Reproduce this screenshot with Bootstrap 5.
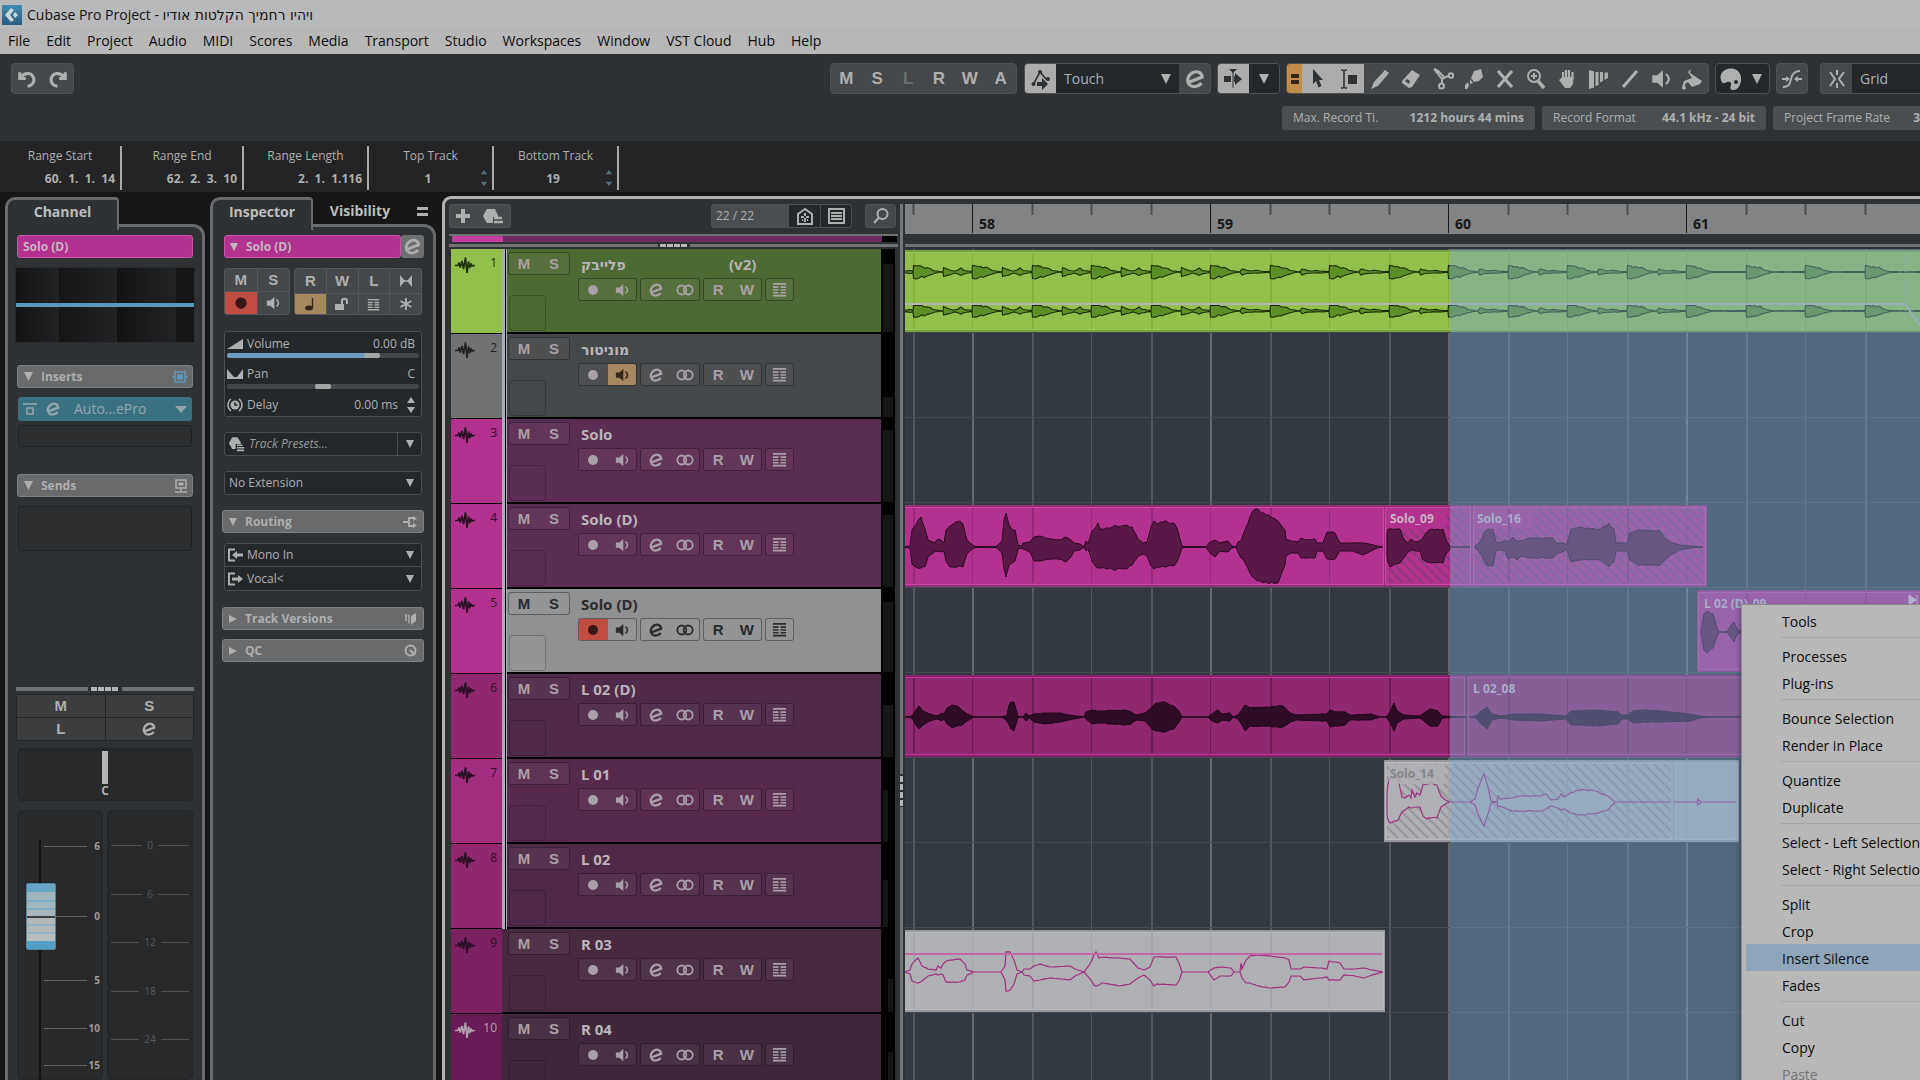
<!DOCTYPE html>
<html lang="en" data-bs-theme="dark">
<head>
<meta charset="utf-8">
<meta name="viewport" content="width=device-width, initial-scale=1">
<title>Cubase Pro Project</title>
<link href="https://cdn.jsdelivr.net/npm/bootstrap@5.3.0/dist/css/bootstrap.min.css" rel="stylesheet">
<style>
:root{--panel:#2e3235;--well:#24272a;--edge:#696a6e;--ink:#aeafaf;--btn:#45484a;--pink:#b3328f}
body{font-family:"Open Sans","Noto Sans","DejaVu Sans",sans-serif;font-size:12px;line-height:16px;background:#161616;color:var(--ink)}
svg.ico{fill:none;stroke:currentColor;stroke-width:2;flex:none;display:block}
button{background:none;border:0;padding:0;color:inherit;display:flex;align-items:center;justify-content:center;font:inherit}
a{color:inherit;text-decoration:none}
select{appearance:none;border:0;color:inherit;font:inherit;border-radius:0}
select,select.box{background:#24282b url("data:image/svg+xml,%3Csvg xmlns='http://www.w3.org/2000/svg' width='10' height='10'%3E%3Cpath d='M0 0h10L5 10z' fill='%23aeafaf'/%3E%3C/svg%3E") no-repeat right 7px center/8px 8px}
.heb{font-family:"DejaVu Sans",sans-serif}
.titlebar{height:28px;background:#b8b9bb;color:#141414;font-size:14px;gap:5px;padding:2px 2px 0}
.menubar{height:26px;background:#b7b7b7;color:#0c0c0c;font-size:14px}
.menubar a{padding:0 8px}
.toolzone{height:87px;background:var(--panel);padding:9px 0 0 11px}
.grp{height:31px;background:var(--btn);border:1px solid #4e5254;border-radius:4px;overflow:hidden}
.grp button{flex:1 1 0}
.grp>.lit{background:#abacab;color:#2f3234}
.grp>.amber{background:#c18d49;color:#33291b;flex:0 0 15px}
.grp>select{font-size:14px;padding:0 22px 0 8px;background-size:10px 10px;background-position:right 8px center}
.grp>select.snaptype{background-image:none}
.big{font:bold 17px/20px "Liberation Sans",sans-serif}
.statchip{height:24px;background:#4b4e50;border-radius:3px;padding:0 11px}
.infoline{height:51px;background:#242426;padding-top:5px}
.infocell{height:44px;width:122px;border-right:2px solid #a9a9a9;text-align:center;line-height:20px}
.infocell.wide{width:125px}
.infocell b{display:block;line-height:22px;margin-top:2px;padding-right:5px;white-space:pre}
.tabhead{height:27px}
.tabtop{border:3px solid var(--edge);border-bottom:0;border-radius:10px 4px 0 0;background:var(--panel);font-size:14px;font-weight:bold;height:33px;padding-bottom:7px;position:relative;z-index:1;margin-bottom:-6px;color:#bdbebe;border-right-width:2px}
.panebody{border:3px solid var(--edge);border-bottom:0;border-radius:0 12px 0 0;background:var(--panel);padding:8px 9px 0}
.namebar{height:23px;background:var(--pink);border:1px solid #c657a8;border-radius:3px;color:#c4b6c0;font-weight:bold;padding:0 5px}
.sechead{height:23px;background:#696a6c;border:1px solid #7e7f81;border-radius:3px;color:#aeafaf;font-weight:bold;padding:0 6px;flex:none}
.well{background:#2d2e30;border:1px solid #202223;border-radius:3px}
.eqview{height:76px;border:1px solid #27292b;background:linear-gradient(90deg,#131314,#212224 24%,#151516 24%,#222325 57%,#131314 57%,#222325 90%,#161617 90%);margin:9px -2px 0}
.grip{height:4px;width:28px;background:repeating-linear-gradient(90deg,#b4b5b5 0 6px,transparent 6px 7px)}
.ctlgrid{display:grid;border:1px solid #232526;background:#232526;gap:1px;border-radius:3px}
.ctlgrid button{background:#3c3d3f;height:22px}
.bt{font:bold 15px/18px "Liberation Sans",sans-serif}
.insgrid{border:1px solid #54575a;border-radius:3px;display:grid;background:#54575a;gap:1px;height:47px;overflow:hidden}
.insgrid button{background:#45484a}
.insgrid .rec,.rec{background:#c14c41!important;color:#351817!important}
.insgrid .mon,.mon{background:#a78760!important;color:#33261a!important}
.box,select.box{background-color:#24282b;border:1px solid #494d50;border-radius:3px}
input[type=range]{appearance:none;display:block;margin:0;padding:0;background:none}
.hslide{width:192px;height:5px}
.hslide::-webkit-slider-runnable-track{height:5px;border-radius:2px;background:#454648}
.hslide.vol::-webkit-slider-runnable-track{background:linear-gradient(90deg,#6a9dc0 140px,#454648 140px)}
.hslide::-webkit-slider-thumb{appearance:none;width:16px;height:5px;border-radius:2px;background:#a5a6a6}
.faderwell{background:#28292b;border:2px solid #242627;border-radius:5px;position:relative;font-size:10px}
.fader{position:absolute;left:7px;top:28px;width:240px;height:30px;transform-origin:0 0;transform:rotate(90deg) translateY(-100%)}
.fader::-webkit-slider-runnable-track{height:30px;background:linear-gradient(#0000 15px,#131414 15px 17px,#0000 17px)}
.fader::-webkit-slider-thumb{appearance:none;width:67px;height:30px;border-radius:2px;border:1px solid #4d86a5;background:linear-gradient(90deg,#67a5c5 8px,#a0b4bd 8px 16px,#7eacc2 16px 18px,#a3b6be 18px 24px,#7eacc2 24px 26px,#aab6bb 26px 32px,#3c3f40 32px 34px,#b3b8ba 34px 40px,#8fb3c4 40px 42px,#b3b8ba 42px 48px,#8fb3c4 48px 50px,#b9bcbc 50px 57px,#549fc6 57px)}
.scalerow{position:absolute;right:1px;width:56px;display:flex;align-items:center;justify-content:space-between;height:12px;font-weight:bold;color:#9b9c9c;line-height:12px}
.scalerow i,.peakrow i{height:1px;background:#5f6162;flex:0 0 43px}
.peakrow{position:absolute;left:2px;right:2px;display:flex;align-items:center;gap:5px;height:12px;color:#5a5c5d}
.peakrow i{flex:1 1 0;background:#4e5052}
.project{border:3px solid #b3b1b1;border-right:0;border-bottom:0;border-radius:9px 0 0 0;background:var(--panel);padding-top:5px;margin-left:6px}
.tracklist{width:454px;padding-left:4px;flex:none}
.tb{height:24px;background:var(--btn);border:1px solid #4e5254;border-radius:3px;overflow:hidden}
.track{height:85px;background:#000;flex:none}
.tcol{width:51px;height:84px;color:#2a1024;padding:7px 5px 0 4px}
.tcol span{line-height:14px}
.strip{width:5px;background:linear-gradient(90deg,#a9acb6 3px,#000 3px 4px,#a9acb6 4px)}
.tbody{height:83px;width:374px;padding:3px 0 0 1px;color:#a99fa8}
.cell{height:23px;background:#ffffff0b;border:1px solid #0000005c;border-radius:3px;overflow:hidden}
.cell button{flex:1 1 0}
.ms{width:62px}
.artbox{width:37px;height:36px;border:1px solid #00000038;border-radius:4px;margin:20px 0 0 1px}
.tname{font:bold 15px/18px "Noto Sans","Open Sans",sans-serif;height:18px;margin:3px 0 5px 3px;color:#b9b4b9;white-space:nowrap}
.tname .heb{font-size:14px}
.picked{color:#2b2c2c}.picked .tname{color:#2b2c2c}.picked .artbox{background:#ffffff0a}
.tmeter{width:14px;padding:0 2px}
.tmeter i{display:block;background:#161616}
.split{width:3px;margin:0 2px 0 1px;background:#737577;position:relative}
.split i{position:absolute;left:0;top:570px;width:3px;height:33px;background:repeating-linear-gradient(#2e3235 0 2px,#b4b5b5 2px 8px)}
.ctx{position:absolute;right:0;top:604px;width:179px;height:476px;background:#b8b8b8;border:1px solid #8c8c8c;border-right:0;border-bottom:0;color:#0c0c0c;font-size:14px;overflow:hidden;padding:2px 0 0 4px;z-index:5;box-shadow:-2px 2px 4px #0004}
.ctx a{display:block;height:27px;line-height:29px;padding-left:36px;white-space:nowrap}
.ctx hr{margin:3px 0 4px 35px;border:0;border-top:1px solid #a6a6a6;opacity:1}
.ctx .hot{background:#8ea5ba}
.ctx .off{color:#767676}
</style>
</head>
<body class="vh-100 overflow-hidden d-flex flex-column position-relative">
<svg width="0" height="0" class="position-absolute" aria-hidden="true">
<symbol id="e" viewBox="0 0 16 16"><path d="M3.4 10.3 13.2 6.6C13 3.200 9.500 1.800 6.300 3.400 2.600 5.300 1.600 9.700 4 12.200c2.200 2.200 6.200 1.600 8.800-1.200" stroke-width="2.300"/></symbol>
<symbol id="undo" viewBox="0 0 18 18"><path d="M2.500 3v5.500H8M3 8C6 3.500 12 2.500 14.500 7c2 4-.500 8-5 8.500" stroke-width="2.800"/></symbol>
<symbol id="redo" viewBox="0 0 18 18"><path d="M15.500 3v5.500H10M15 8C12 3.500 6 2.500 3.500 7c-2 4 .500 8 5 8.500" stroke-width="2.800"/></symbol>
<symbol id="tri" viewBox="0 0 10 10"><path d="M0 0h10L5 10z" fill="currentColor" stroke="none"/></symbol>
<symbol id="trir" viewBox="0 0 10 10"><path d="M0 0v10l10-5z" fill="currentColor" stroke="none"/></symbol>
<symbol id="spin" viewBox="0 0 8 16"><path d="M0 6l4-6 4 6zM0 10h8l-4 6z" fill="currentColor" stroke="none"/></symbol>
<symbol id="spin2" viewBox="0 0 6 15"><path d="M0 4l3-4 3 4zM0 11h6l-3 4z" fill="currentColor" stroke="none"/></symbol>
<symbol id="spk" viewBox="0 0 16 16"><path d="M1 5h4l4.500-4v14L5 11H1z" fill="currentColor" stroke="none"/><path d="M12 4c3 2.500 3 5.500 0 8" stroke-width="1.800"/></symbol>
<symbol id="rings" viewBox="0 0 20 14"><circle cx="6.800" cy="7" r="4.500" stroke-width="1.800"/><circle cx="13.200" cy="7" r="4.500" stroke-width="1.800"/></symbol>
<symbol id="lanes" viewBox="0 0 16 16"><path d="M1 2h14M1 5.500h6M9 5.500h6M1 8.500h6M9 8.500h6M1 11.500h6M9 11.500h6M1 14.500h14" stroke-width="1.700"/></symbol>
<symbol id="dot" viewBox="0 0 16 16"><circle cx="8" cy="8" r="5" fill="currentColor" stroke="none"/></symbol>
<symbol id="wav" viewBox="0 0 20 18"><path d="M0 9.500H3L4 6.500 5.200 11.500 7 5 8.500 13 10.500 1.500 12 17 13.500 5.500 14.800 12 16 7.500 17 10.500 18 9.500h2" stroke-width="1.700" stroke-linejoin="bevel"/></symbol>
<symbol id="preset" viewBox="0 0 20 18"><path d="M5 1h6l4 6v2H9v6H5L1 8z" fill="currentColor" stroke="none"/><path d="M10.500 10.500H17M10.500 13.500H19M10.500 16.500H19" stroke-width="1.800"/></symbol>
<symbol id="mag" viewBox="0 0 18 18"><circle cx="10.500" cy="7" r="5"/><path d="M7 10.500 2 16"/></symbol>
</svg>

<header class="titlebar d-flex align-items-center flex-shrink-0">
<svg width="20" height="24" viewBox="0 0 20 24"><defs><linearGradient id="lg" x2="0" y2="1"><stop stop-color="#3f8db5"/><stop offset="1" stop-color="#2a5a80"/></linearGradient></defs><path d="M0 2h20v20H0z" fill="url(#lg)"/><path d="M9 5l3 2-4 5 4 5-3 2-6-7z" fill="#cfd6da"/><path d="M13 9l3 3-3 3-2-3z" fill="#cfd6da"/></svg>
<span>Cubase Pro Project - <span class="heb">ויהיו רחמיך הקלטות אודיו</span></span>
</header>
<nav class="menubar d-flex align-items-center flex-shrink-0"><a href="#">File</a><a href="#">Edit</a><a href="#">Project</a><a href="#">Audio</a><a href="#">MIDI</a><a href="#">Scores</a><a href="#">Media</a><a href="#">Transport</a><a href="#">Studio</a><a href="#">Workspaces</a><a href="#">Window</a><a href="#">VST Cloud</a><a href="#">Hub</a><a href="#">Help</a></nav>

<section class="toolzone flex-shrink-0">
<div class="d-flex">
<div class="grp d-flex" style="width:63px"><button aria-label="Undo"><svg class="ico" width="20" height="20"><use href="#undo"/></svg></button><button aria-label="Redo"><svg class="ico" width="20" height="20"><use href="#redo"/></svg></button></div>
<div class="grp d-flex big ms-auto" style="width:187px"><button>M</button><button>S</button><button style="color:#6c6e6f">L</button><button>R</button><button>W</button><button>A</button></div>
<div class="grp d-flex" style="width:187px;margin-left:7px"><button class="lit" aria-label="Automation follows events" style="flex:0 0 31px"><svg class="ico" width="22" height="24" viewBox="0 0 22 24"><path d="M3 18 10 5l7 8" stroke-width="1.600"/><circle cx="3.500" cy="17" r="2" fill="currentColor" stroke="none"/><circle cx="10" cy="5" r="2" fill="currentColor" stroke="none"/><circle cx="18" cy="12" r="2" fill="currentColor" stroke="none"/><path d="M7 15h5v-4l6 6-6 6v-4H7z" fill="currentColor" stroke="none"/></svg></button><select aria-label="Automation mode" style="width:123px"><option>Touch</option></select><button aria-label="Automation panel"><svg class="ico" width="22" height="22"><use href="#e"/></svg></button></div>
<div class="grp d-flex" style="width:63px;margin-left:6px"><button class="lit" aria-label="Auto-scroll"><svg class="ico" width="20" height="20" viewBox="0 0 20 20"><path d="M1 7h7v6H1zM12 7v-3l7 6-7 6v-3h-1V7zM6 0h8l-4 4z" fill="currentColor" stroke="none"/><path d="M10 1v18" stroke-width="1"/></svg></button><button aria-label="Auto-scroll options" style="background:#24282b"><svg class="ico" width="10" height="10"><use href="#tri"/></svg></button></div>
<div class="grp d-flex" style="width:423px;margin-left:6px">
<button class="amber" aria-label="Combine tools"><svg class="ico" width="8" height="12" viewBox="0 0 8 12"><path d="M0 3h8M0 9h8" stroke-width="4"/></svg></button>
<button class="lit" aria-label="Object selection"><svg class="ico" width="14" height="20" viewBox="0 0 14 20"><path d="M2 0l10 11H8l2.500 6-3 1.500L5 12l-3 3z" fill="currentColor" stroke="none"/></svg></button>
<button class="lit" aria-label="Range selection"><svg class="ico" width="20" height="22" viewBox="0 0 20 22"><path d="M2 2q3 0 3 1 0-1 3-1M5 3v16M2 20q3 0 3-1 0 1 3 1" stroke-width="1.600"/><path d="M9 7h9v9H9z" fill="currentColor" stroke="none"/></svg></button>
<button aria-label="Draw"><svg class="ico" width="20" height="22" viewBox="0 0 20 22"><path d="M1 21l3-7L15 2l4 3L8 18z" fill="currentColor" stroke="none"/></svg></button>
<button aria-label="Erase"><svg class="ico" width="20" height="20" viewBox="0 0 20 20"><path d="M11 1l8 5-8 12-3 1-7-5v-2z" fill="currentColor" stroke="none"/><path d="M4 12l4 3 1-3-3-2z" fill="#45484a" stroke="none"/></svg></button>
<button aria-label="Split"><svg class="ico" width="22" height="22" viewBox="0 0 22 22"><path d="M2 1l8 10 6-3M10 10v5M2 1l3 1 8 8"/><circle cx="9.500" cy="18" r="2.500"/><circle cx="19" cy="7.500" r="2.300"/></svg></button>
<button aria-label="Glue"><svg class="ico" width="20" height="22" viewBox="0 0 20 22"><path d="M10 3l7-2 2 8-4 4-5 1-3-4zM6 11l3 4-3 1zM1 17l3-3 1 4-2 3H1z" fill="currentColor" stroke="none"/></svg></button>
<button aria-label="Mute"><svg class="ico" width="18" height="20" viewBox="0 0 18 20"><path d="M2 2l14 16M16 2 2 18" stroke-width="3.200"/></svg></button>
<button aria-label="Zoom"><svg class="ico" width="20" height="22" viewBox="0 0 20 22"><circle cx="8" cy="8" r="6"/><path d="M8 5v6M5 8h6"/><path d="M12 13l6 7" stroke-width="3.500"/></svg></button>
<button aria-label="Hand"><svg class="ico" width="18" height="22" viewBox="0 0 18 22"><path d="M5 11V4M8 10V2M11 10V2M14.500 11V4" stroke-width="2.200"/><path d="M4 9h11.600l-.600 7-3 4H7L1 12l1.500-1z" fill="currentColor" stroke="none"/></svg></button>
<button aria-label="Comp"><svg class="ico" width="22" height="20" viewBox="0 0 22 20"><path d="M1 1l5 1.500v16L1 20zM7.500 3h3v13l-3 1zM12 3h3v9l-3 1.500zM16.500 3.500h3.500V9l-3.500 2z" fill="currentColor" stroke="none"/></svg></button>
<button aria-label="Line"><svg class="ico" width="18" height="20" viewBox="0 0 18 20"><path d="M2 18 16 2" stroke-width="3"/></svg></button>
<button aria-label="Play"><svg class="ico" width="20" height="20"><use href="#spk"/></svg></button>
<button aria-label="Color"><svg class="ico" width="22" height="22" viewBox="0 0 22 22"><path d="M10 1 9 5l12 8-2 3-8 3-4-5-3 2 1 5-3 1-1-3 2-6 8-3-4-6z" fill="currentColor" stroke="none"/></svg></button>
</div>
<div class="grp d-flex" style="width:55px;margin-left:6px;background:#24282b"><button aria-label="Event colors"><svg class="ico" width="24" height="24" viewBox="0 0 24 24"><path d="M3 15C0 10 2 5 6 3c6-3 13-1 15 4 2 4 1 8 0 10-1 4-4 6-7 6s-3-3-2-5-1-4-4-3c-2 1-4 2-5 0z" fill="currentColor" stroke="none"/><circle cx="17" cy="15" r="2" fill="#24282b" stroke="none"/></svg></button><button style="flex:0 0 24px" aria-label="Color menu"><svg class="ico" width="10" height="10"><use href="#tri"/></svg></button></div>
<div class="grp d-flex" style="width:32px;margin-left:6px"><button aria-label="Snap to zero crossing"><svg class="ico" width="22" height="22" viewBox="0 0 22 22"><path d="M2 19c6 0 7-3 8-8s4-8 9-8M1 11h5M16 11h5" stroke-width="1.800"/><path d="M5 8l4 3-4 3zM17 8v6l-4-3z" fill="currentColor" stroke="none"/></svg></button></div>
<div class="grp d-flex border-end-0 rounded-end-0" style="width:100px;margin-left:12px"><button aria-label="Snap" style="flex:0 0 31px"><svg class="ico" width="20" height="20" viewBox="0 0 20 20"><path d="M10 1v5M10 14v5M3 3l5 7-5 7M17 3l-5 7 5 7"/></svg></button><select aria-label="Snap type" class="flex-fill snaptype"><option>Grid</option></select></div>
</div>
<div class="d-flex justify-content-end" style="margin-top:12px;gap:7px">
<div class="statchip d-flex align-items-center justify-content-between" style="width:253px"><span>Max. Record Ti.</span><b>1212 hours 44 mins</b></div>
<div class="statchip d-flex align-items-center justify-content-between" style="width:224px"><span>Record Format</span><b>44.1 kHz - 24 bit</b></div>
<div class="statchip d-flex align-items-center justify-content-between overflow-hidden rounded-end-0 pe-0" style="width:147px"><span>Project Frame Rate</span><b>3</b></div>
</div>
</section>

<section class="infoline d-flex flex-shrink-0">
<div class="infocell text-end"><div class="text-center">Range Start</div><b>60.  1.  1.  14</b></div>
<div class="infocell text-end"><div class="text-center">Range End</div><b>62.  2.  3.  10</b></div>
<div class="infocell wide text-end"><div class="text-center">Range Length</div><b>2.  1.  1.116</b></div>
<div class="infocell wide position-relative">Top Track<b>1</b><svg class="ico position-absolute bottom-0 end-0 mb-1 me-1" width="8" height="16" style="color:#55707f"><use href="#spin2"/></svg></div>
<div class="infocell wide position-relative">Bottom Track<b>19</b><svg class="ico position-absolute bottom-0 end-0 mb-1 me-1" width="8" height="16" style="color:#55707f"><use href="#spin2"/></svg></div>
</section>

<main class="d-flex flex-fill overflow-hidden" style="padding:5px 0 0 5px;min-height:0">
<!-- channel strip -->
<aside class="d-flex flex-column flex-shrink-0" style="width:200px">
<div class="tabhead d-flex"><div class="tabtop d-flex align-items-center justify-content-center" style="width:114px">Channel</div></div>
<div class="panebody flex-fill d-flex flex-column" style="min-height:0">
<div class="namebar d-flex align-items-center flex-shrink-0">Solo (D)</div>
<div class="eqview flex-shrink-0"><div style="height:4px;margin-top:35px;background:#5c97bd"></div></div>
<div class="sechead d-flex align-items-center" style="margin-top:22px"><svg class="ico" width="9" height="9"><use href="#tri"/></svg><span class="ms-2">Inserts</span><svg class="ico ms-auto" width="16" height="12" viewBox="0 0 16 12" style="color:#5f98bd;margin-right:-2px"><path d="M3 1h10v10H3zM0 6h3M13 6h3" stroke-width="1.500"/><path d="M5 3.500h6v5H5z" fill="currentColor" stroke="none"/></svg></div>
<div class="d-flex align-items-center flex-shrink-0" style="height:24px;margin:9px 1px 0;background:#3a7181;border-radius:3px;padding:0 5px;color:#94a6ac"><svg class="ico" width="14" height="14" viewBox="0 0 14 14"><path d="M0 2h14M4 6h6v6H4z" stroke-width="1.600"/></svg><svg class="ico ms-2" width="16" height="16"><use href="#e"/></svg><span class="flex-fill" style="font-size:14px;padding-left:13px">Auto...ePro</span><svg class="ico" width="12" height="7" viewBox="0 0 10 10" preserveAspectRatio="none"><path d="M0 0h10L5 10z" fill="currentColor" stroke="none"/></svg></div>
<div class="well flex-shrink-0" style="height:22px;margin:4px 1px 0"></div>
<div class="sechead d-flex align-items-center" style="margin-top:27px"><svg class="ico" width="9" height="9"><use href="#tri"/></svg><span class="ms-2">Sends</span><svg class="ico ms-auto" width="14" height="14" viewBox="0 0 14 14" style="margin-right:-2px"><path d="M2 1h10v8H2zM7 9v3M1 13h12" stroke-width="1.500"/><path d="M4.500 3.500h5v3h-5z" fill="currentColor" stroke="none"/></svg></div>
<div class="well flex-shrink-0" style="height:45px;margin:9px 1px 0"></div>
<div class="d-flex align-items-center justify-content-between flex-shrink-0" style="margin:136px -1px 3px;gap:3px"><div class="flex-fill" style="height:4px;background:#6f7071"></div><div class="grip"></div><div class="flex-fill" style="height:4px;background:#6f7071"></div></div>
<div class="ctlgrid bt flex-shrink-0" style="grid-template-columns:1fr 1fr;margin:0 -1px"><button>M</button><button>S</button><button>L</button><button aria-label="Edit channel"><svg class="ico" width="16" height="16"><use href="#e"/></svg></button></div>
<div class="faderwell d-flex flex-column align-items-center flex-shrink-0" style="height:53px;margin-top:7px"><div style="width:6px;height:33px;margin-top:1px;background:#b4b5b5"></div><b style="font-size:12px;line-height:14px">C</b></div>
<div class="d-flex flex-fill" style="gap:4px;margin-top:9px">
<div class="faderwell flex-fill" style="flex-basis:0" id="faderbox"><input class="fader" type="range" value="25" min="0" max="100" aria-label="Channel volume"></div>
<div class="faderwell flex-fill overflow-hidden" style="flex-basis:0" id="peakbox"></div>
</div>
</div>
</aside>

<!-- inspector -->
<aside class="d-flex flex-column flex-shrink-0" style="width:226px;margin-left:5px">
<div class="tabhead d-flex"><div class="tabtop d-flex align-items-center justify-content-center" style="width:103px">Inspector</div><a href="#" class="d-flex align-items-center justify-content-center fw-bold" style="font-size:14px;width:94px;color:#bdbebe;height:28px">Visibility</a><svg class="ico" width="12" height="29" viewBox="0 0 12 29" style="margin-left:10px"><path d="M0 11.500h11M0 17.500h11" stroke-width="3"/></svg></div>
<div class="panebody flex-fill" style="padding-left:11px">
<div class="d-flex"><div class="namebar flex-fill d-flex align-items-center"><svg class="ico" width="8" height="8"><use href="#tri"/></svg><span class="ms-2">Solo (D)</span></div><button style="width:23px;background:#6e6f71;border-radius:3px" aria-label="Edit channel settings"><svg class="ico" width="19" height="19"><use href="#e"/></svg></button></div>
<div class="d-flex" style="margin:10px 2px 0 0;gap:4px">
<div class="insgrid bt" style="grid-template-columns:1fr 1fr;width:66px"><button>M</button><button>S</button><button class="rec" aria-label="Record enable"><svg class="ico" width="18" height="18"><use href="#dot"/></svg></button><button aria-label="Monitor"><svg class="ico" width="14" height="14"><use href="#spk"/></svg></button></div>
<div class="insgrid bt flex-fill" style="grid-template-columns:repeat(4,1fr)"><button>R</button><button>W</button><button>L</button><button aria-label="Freeze"><svg class="ico" width="12" height="12" viewBox="0 0 12 12"><path d="M0 0l5 6-5 6zM12 0 7 6l5 6z" fill="currentColor" stroke="none"/><path d="M4 6h4" stroke-width="1.500"/></svg></button><button class="mon" aria-label="Musical time"><svg class="ico" width="12" height="14" viewBox="0 0 12 14"><ellipse cx="5" cy="11" rx="4" ry="2.500" fill="currentColor" stroke="none"/><path d="M8.500 11V1" stroke-width="1.300"/></svg></button><button aria-label="Lock"><svg class="ico" width="14" height="14" viewBox="0 0 14 14"><path d="M0 7h9v6H0z" fill="currentColor" stroke="none"/><path d="M7 8V4c0-3 5-3 5 0v3"/></svg></button><button aria-label="Lanes"><svg class="ico" width="13" height="13"><use href="#lanes"/></svg></button><button aria-label="Phase"><svg class="ico" width="14" height="14" viewBox="0 0 14 14"><path d="M7 1v12M1.500 4l11 6M12.500 4l-11 6" stroke-width="1.800"/></svg></button></div>
</div>
<div class="box" style="margin:16px 2px 0 0;padding:2px 2px 3px;height:86px">
<div class="d-flex align-items-center" style="height:19px"><svg class="ico" width="16" height="10" viewBox="0 0 16 10"><path d="M0 10 16 0v10z" fill="currentColor" stroke="none"/></svg><label for="vol" class="ms-1">Volume</label><span class="ms-auto me-1">0.00 dB</span></div>
<input id="vol" class="hslide vol" type="range" min="0" max="100" value="78">
<div class="d-flex align-items-center" style="height:20px;margin-top:6px"><svg class="ico" width="16" height="10" viewBox="0 0 16 10"><path d="M0 0v10h16V0l-6 8H7z" fill="currentColor" stroke="none"/></svg><label for="pan" class="ms-1">Pan</label><span class="ms-auto me-1">C</span></div>
<input id="pan" class="hslide" type="range" min="0" max="100" value="50">
<div class="d-flex align-items-center" style="height:20px;margin-top:6px"><svg class="ico" width="16" height="14" viewBox="0 0 16 14"><circle cx="8" cy="7" r="4.500" fill="currentColor" stroke="none"/><path d="M8 4v3h2.500" stroke="#24282b" stroke-width="1.300"/><path d="M4 1C0 4 0 10 4 13M12 1c4 3 4 9 0 12" stroke-width="1.500"/></svg><span class="ms-1">Delay</span><span class="ms-auto" style="margin-right:9px">0.00 ms</span><svg class="ico me-1" width="8" height="16"><use href="#spin"/></svg></div>
</div>
<div class="box d-flex align-items-center" style="margin:15px 2px 0 0;height:24px;padding:0 0 0 3px"><svg class="ico" width="17" height="16"><use href="#preset"/></svg><em class="ms-1" style="color:#989a9a">Track Presets...</em><button class="ms-auto h-100" style="width:24px;border-left:1px solid #494d50" aria-label="Choose preset"><svg class="ico" width="8" height="8"><use href="#tri"/></svg></button></div>
<select class="box d-block" aria-label="Extension" style="margin-top:15px;height:24px;width:198px;padding:0 4px"><option>No Extension</option></select>
<div class="sechead d-flex align-items-center" style="margin:15px 0 0 -2px"><svg class="ico" width="8" height="8"><use href="#tri"/></svg><span class="ms-2">Routing</span><svg class="ico ms-auto" width="14" height="12" viewBox="0 0 14 12"><path d="M0 6h5M11 2H6v8h5" stroke-width="1.800"/><path d="M10 0l4 2.500L10 5zM10 7l4 2.500-4 2.500z" fill="currentColor" stroke="none"/></svg></div>
<div class="box" style="margin:10px 2px 0 0;height:48px">
<div class="d-flex align-items-center" style="height:23px;padding-left:3px;border-bottom:1px solid #494d50"><svg class="ico" width="15" height="14" viewBox="0 0 15 14"><path d="M7 1.500H1v11h6" /><path d="M4 7l5-4v2.500h6v3H9V11z" fill="currentColor" stroke="none"/></svg><select class="flex-fill" aria-label="Input routing" style="padding:0 4px"><option>Mono In</option></select></div>
<div class="d-flex align-items-center" style="height:23px;padding-left:3px"><svg class="ico" width="15" height="14" viewBox="0 0 15 14"><path d="M7 1.500H1v11h6"/><path d="M15 7l-5-4v2.500H4v3h6V11z" fill="currentColor" stroke="none"/></svg><select class="flex-fill" aria-label="Output routing" style="padding:0 4px"><option>Vocal&lt;</option></select></div>
</div>
<div class="sechead d-flex align-items-center" style="margin:16px 0 0 -2px"><svg class="ico" width="8" height="8"><use href="#trir"/></svg><span class="ms-2">Track Versions</span><svg class="ico ms-auto" width="12" height="12" viewBox="0 0 12 12"><path d="M1 1v7M4 1.500v9" stroke-width="1.500"/><path d="M6 3l5-3v8l-5 4z" fill="currentColor" stroke="none"/></svg></div>
<div class="sechead d-flex align-items-center" style="margin:9px 0 0 -2px"><svg class="ico" width="8" height="8"><use href="#trir"/></svg><span class="ms-2">QC</span><svg class="ico ms-auto" width="13" height="13" viewBox="0 0 13 13"><circle cx="6.500" cy="6.500" r="5"/><path d="M6 6l5 5"/></svg></div>
</div>
</aside>

<!-- project window -->
<section class="project d-flex flex-fill" style="min-width:0;margin-top:-1px">
<div class="tracklist d-flex flex-column">
<div class="d-flex flex-shrink-0">
<div class="tb d-flex" style="width:62px"><button class="flex-fill" aria-label="Add track"><svg class="ico" width="14" height="14" viewBox="0 0 14 14"><path d="M7 0v14M0 7h14" stroke-width="4"/></svg></button><button class="flex-fill" aria-label="Use track preset"><svg class="ico" width="22" height="16" viewBox="0 0 22 16"><path d="M5 1h8l3 6v2h-5v6H5L1 8z" fill="currentColor" stroke="none"/><path d="M12 10h8M12 14h9" stroke-width="2.400"/></svg></button></div>
<div class="tb d-flex ms-auto" style="width:141px"><span class="ps-1 flex-fill" style="line-height:22px;background:#4b4e50">22 / 22</span><button style="width:31px;background:#24282b" aria-label="Track visibility"><svg class="ico" width="18" height="17" viewBox="0 0 18 17"><path d="M2 6l7-5 7 5v10H2z"/><path d="M5 9h3M10 9h3M9 5v3M9 10v4M6 12h1M11 12h1" /></svg></button><button style="width:31px;background:#24282b;border-left:1px solid #4e5254" aria-label="Divide list"><svg class="ico" width="17" height="16" viewBox="0 0 17 16"><path d="M1 1h15v14H1zM3 5h11M3 8h11M3 11h11"/></svg></button></div>
<div class="tb d-flex" style="width:31px;margin:0 3px 0 13px"><button class="flex-fill" aria-label="Find track"><svg class="ico" width="18" height="18"><use href="#mag"/></svg></button></div>
</div>
<div class="flex-shrink-0" style="margin:6px 1px 0 0;height:2px;background:#6f7173"></div>
<div class="flex-shrink-0" style="margin:0 2px 2px 3px;height:6px;background:linear-gradient(90deg,#c43d9f 51px,#6a2d60 51px 430px,#000 430px)"></div>
<div class="d-flex flex-shrink-0" style="gap:2px;margin:0 1px 2px 0"><div style="height:3px;width:209px;background:#6f7173"></div><div class="grip" style="height:3px"></div><div class="flex-fill" style="height:3px;background:#6f7173"></div></div>
<div id="tracks" class="flex-fill overflow-hidden" style="margin-left:2px;width:444px;background:#000"></div>
</div>
<div class="split flex-shrink-0"><i></i></div>
<div class="d-flex flex-column flex-fill" style="min-width:0">
<svg id="ruler" class="flex-shrink-0 w-100" height="30" style="background:#828385"></svg>
<div class="flex-shrink-0" style="height:3px;margin:10px 0 2px;background:#6f7173"></div>
<svg id="arrange" class="flex-fill w-100" style="min-height:0;background:#323941"></svg>
</div>
</section>
</main>

<div class="ctx" role="menu"><a href="#">Tools</a><hr><a href="#">Processes</a><a href="#">Plug-ins</a><hr><a href="#">Bounce Selection</a><a href="#">Render in Place</a><hr><a href="#">Quantize</a><a href="#">Duplicate</a><hr><a href="#">Select - Left Selection Side to Cursor</a><a href="#">Select - Right Selection Side to Cursor</a><hr><a href="#">Split</a><a href="#">Crop</a><a href="#" class="hot">Insert Silence</a><a href="#">Fades</a><hr><a href="#">Cut</a><a href="#">Copy</a><a href="#" class="off">Paste</a></div>

<script>
const ic=(id,w,h)=>`<svg class="ico" width="${w}" height="${h||w}"><use href="#${id}"/></svg>`;

/* track list: name, colour, body, [meter top, left, width], state */
const TRACKS=[
 ['<span class="heb" style="display:inline-block;width:148px">פלייבק</span>(v2)','#93bf4d','#4e6a33',15,0,10,''],
 ['<span class="heb">מוניטור</span>','#717274','#45484a',63,0,10,'mon'],
 ['Solo','#b3328f','#5c2d52',11,0,10,''],
 ['Solo (D)','#b3328f','#5c2d52',11,0,10,''],
 ['Solo (D)','#b3328f','#8f9091',13,0,10,'rec'],
 ['L 02 (D)','#90286f','#4f2a49',31,0,10,''],
 ['L 01','#a22d81','#572a4d',31,0,5,''],
 ['L 02','#90286f','#4f2a48',36,0,5,''],
 ['R 03','#7b2162','#482a40',50,5,5,''],
 ['R 04','#681b54','#40283c',38,5,5,'']];
document.getElementById('tracks').innerHTML=TRACKS.map((t,i)=>{
 const linked=i<8;
 return `<div class="track d-flex"><div class="tcol d-flex justify-content-between" style="background:${t[1]};${i==9?'color:#b0a0ac':i==0?'color:#22330f':i==1?'color:#222':''}">${ic('wav',20,18)}<span>${i+1}</span></div>
 ${linked?'<div class="strip"></div>':''}
 <div class="tbody d-flex ${t[6]=='rec'?'picked':''}" style="background:${t[2]};${linked?'':'width:379px;padding-left:6px'}">
 <div style="width:70px"><div class="cell ms d-flex bt"><button>M</button><button>S</button></div><div class="artbox"></div></div>
 <div><div class="tname">${t[0]}</div><div class="d-flex bt" style="gap:3px">
 <div class="cell d-flex" style="width:59px"><button class="${t[6]=='rec'?'rec':''}" aria-label="Record enable">${ic('dot',16)}</button><button class="${t[6]=='mon'?'mon':''}" aria-label="Monitor">${ic('spk',14)}</button></div>
 <div class="cell d-flex" style="width:60px"><button aria-label="Edit">${ic('e',16)}</button><button aria-label="Channel format">${ic('rings',20,14)}</button></div>
 <div class="cell d-flex" style="width:59px"><button>R</button><button>W</button></div>
 <div class="cell d-flex" style="width:29px"><button aria-label="Show lanes">${ic('lanes',15)}</button></div></div></div></div>
 <div class="tmeter"><i style="width:${t[5]}px;margin:${t[3]}px 0 0 ${t[4]}px;height:${83-t[3]}px"></i></div></div>`}).join('');

/* fader and peak scales: label, y inside the well */
document.getElementById('faderbox').insertAdjacentHTML('afterbegin',[['6',28],['0',98],['5',162],['10',210],['15',247]].map(s=>`<div class="scalerow" style="top:${s[1]}px"><i></i>${s[0]}</div>`).join(''));
document.getElementById('peakbox').innerHTML=[0,6,12,18,24,30].map((v,k)=>`<div class="peakrow" style="top:${Math.round(27+48.5*k)}px"><i></i>${v}<i></i></div>`).join('');

/* ruler */
const beat=k=>Math.round(912.5+59.5*k);
let r='';
for(let k=0;k<17;k++){const bar=k%4==1,x=beat(k)-905;
 r+=`<path d="M${x+.5} 0V${bar?29:11}" stroke="${bar?'#1a1b1c':'#4c4d4f'}" stroke-width="${bar?1:2}"/>`;
 if(bar)r+=`<text x="${x+7}" y="25" font-size="14" font-weight="bold" fill="#161718">${58+(k-1)/4}</text>`}
document.getElementById('ruler').innerHTML=r;

/* envelope points: x, height above, height below the centre line */
const P=s=>s.split(';').map(a=>{a=a.split(',').map(Number);return [a[0],a[1]||0,a.length>2?a[2]:a[1]||0]});
function wave(pts,cy,attr,rough=.06){
 let up=[],dn=[];
 for(let i=0;i<pts.length;i++){
  const [x,u,d]=pts[i],n=pts[i+1];
  up.push([x,cy-u]);dn.push([x,cy+d]);
  if(!n)continue;
  const m=Math.floor((n[0]-x)/2);
  for(let j=1;j<m;j++){const f=j/m,X=x+(n[0]-x)*f,w=1+rough*Math.sin(X*7.3)*Math.cos(X*2.1);
   up.push([X,cy-(u+(n[1]-u)*f)*w]);dn.push([X,cy+(d+(n[2]-d)*f)*w])}
 }
 return `<path ${attr} d="M${up.concat(dn.reverse()).map(p=>p[0].toFixed(1)+' '+p[1].toFixed(1)).join('L')}Z"/>`}
const soloA=P('905,.5;910,1;912,17,17;916,22,20;921,30,21;925,18,20;928,7,10;934,4,5;938,8,4;941,7,5;944,4,4;946,17,14;950,21,20;960,26,19;963,23,20;967,7,7;971,3,3;974,1,1;976,.5;995,.5;997,1,1;1002,6,6;1004,27,22;1006,34,30;1009,22,18;1012,17,16;1015,17,14;1018,2,2;1022,1,1;1023,4,2;1030,5,5;1034,10,14;1040,11,14;1050,8,12;1061,7,12;1065,10,15;1071,7,10;1074,4,4;1080,3,3;1084,0;1086,6,4;1088,3,2;1092,16,14;1096,20,20;1098,24,21;1100,18,21;1106,19,22;1127,22,22;1132,20,18;1138,8,9;1143,4,7;1147,5,9;1151,20,19;1154,26,22;1158,23,20;1163,25,19;1174,24,19;1177,19,15;1182,1,1;1184,.5;1206,.5;1210,5,6;1215,7,10;1220,4,4;1228,6,5;1232,1,1;1236,0;1238,5,5;1241,6,11;1243,12,12;1250,30,26;1254,37,31;1258,38,34;1262,34,35;1270,31,36;1278,26,36;1281,22,28;1285,17,18;1286,8,9;1291,6,6;1298,5,6;1301,9,11;1306,7,11;1315,8,11;1317,4,4;1323,4,4;1327,15,12;1335,14,12;1340,4,4;1353,4,4;1363,4,8;1369,3,5;1377,1,1;1383,0');
const solo09=P('1387,14,10;1388,18,15;1390,18,20;1396,18,17;1400,18,16;1403,9,12;1408,4,5;1411,8,3;1416,5,4;1420,6,4;1422,8,12;1428,16,15;1431,18,16;1443,18,16;1445,10,9;1449,2,3;1451,0;1470,0');
const solo16=P('1475,1,1;1480,5,6;1485,16,16;1488,18,19;1493,18,19;1496,5,4;1500,4,3;1505,7,4;1508,5,12;1513,10,10;1517,6,13;1521,6,9;1530,9,11;1553,9,11;1556,4,7;1562,4,5;1567,3,3;1571,18,15;1580,20,13;1600,18,13;1609,24,20;1614,18,15;1616,4,4;1627,4,4;1630,14,13;1638,17,18;1660,16,18;1665,9,13;1672,4,7;1680,2,3;1690,1,1;1703,0');
const l02a=P('905,0;912,1,1;916,7,8;919,11,12;923,6,8;930,3,4;937,1,2;942,4,4;944,3,2;947,9,7;952,12,11;957,11,9;962,7,8;967,3,4;974,0;1002,0;1007,2,4;1009,12,8;1011,15,12;1014,15,14;1016,8,7;1018,0;1023,0;1026,4,4;1029,1,1;1034,3,5;1045,4,7;1060,4,5;1069,2,3;1084,0;1086,5,2;1092,7,7;1100,6,6;1125,7,8;1131,5,7;1136,2,3;1145,4,4;1152,10,12;1156,14,14;1163,15,15;1174,11,12;1179,6,5;1182,0;1208,0;1212,3,4;1218,7,6;1222,3,3;1230,4,4;1233,0;1238,2,2;1243,9,10;1245,12,14;1250,9,9;1283,11,10;1289,5,6;1296,2,3;1320,3,4;1327,3,4;1330,7,10;1337,5,9;1345,5,8;1350,2,3;1371,3,3;1380,0;1386,0;1390,5,5;1394,14,14;1397,6,6;1404,2,2;1420,1,1;1424,4,4;1430,8,9;1438,6,9;1442,1,1;1466,0');
const l0208=P('1469,0;1476,1;1481,6,7;1487,10,12;1492,3,3;1500,1,1;1515,3,3;1540,3,4;1566,1,2;1571,6,8;1600,7,9;1618,5,7;1622,2,2;1628,2,2;1633,6,6;1645,7,5;1660,6,5;1690,3,4;1700,1,1;1710,0;1742,0');
const l0209=P('1701,1;1704,18,18;1707,21,21;1713,18,16;1718,2,2;1719,0;1727,0;1732,8,7;1734,10,10;1737,3,2;1742,0;1760,0');
const solo14=P('1387,8,12;1388,18,18;1390,24,21;1398,24,18;1402,5,10;1405,4,8;1409,7,5;1411,4,6;1412,12,6;1415,5,5;1417,9,5;1420,7,5;1423,17,14;1427,18,17;1431,20,16;1437,17,16;1441,6,5;1444,3,3;1449,0;1470,0;1475,3,3;1478,14,12;1484,28,24;1488,15,12;1491,1,1;1497,0;1498,6,5;1500,3,4;1512,4,9;1520,6,9;1541,6,9;1546,8,7;1551,2,4;1558,3,6;1561,8,8;1564,5,7;1570,9,11;1578,12,13;1593,12,12;1600,9,10;1608,6,8;1615,0;1671,0');
const r03=P('905,0;910,2,2;912,8,9;918,14,11;922,6,9;928,3,4;936,2,2;938,6,3;941,4,2;943,8,3;946,11,10;960,13,10;965,8,8;967,2,3;974,0;1001,0;1005,6,8;1006,20,19;1010,20,18;1014,12,12;1017,2,2;1022,0;1024,3,3;1030,3,4;1034,6,9;1040,8,8;1050,5,6;1070,6,8;1075,3,4;1084,0;1090,8,7;1094,17,13;1096,20,14;1099,14,13;1102,15,11;1120,14,14;1130,13,12;1138,4,6;1144,2,3;1150,5,8;1154,15,14;1157,15,12;1176,15,13;1179,9,9;1182,0;1208,0;1214,4,8;1220,5,4;1231,4,4;1234,0;1240,0;1241,9,3;1242,3,6;1246,12,11;1250,16,11;1258,17,14;1270,16,16;1285,14,15;1289,12,10;1291,3,4;1300,3,4;1304,5,8;1320,4,6;1327,3,5;1329,11,8;1340,9,8;1344,3,3;1355,3,4;1364,4,6;1372,2,3;1383,0');
/* backing track: one burst on every beat with softer echoes */
let back=[[905,1,1],[911,1.5,1.5]];
for(let k=0;k<30;k++){const x=Math.round(912.5+59.5*k),n=o=>Math.sin((x+o)*3.7);
 back.push([x,.4,.4],[x+.5,6.5,6.5],[x+4,6,7],[x+6,5.5+n(1),6],[x+9,5.5,5+n(2)],[x+11,4,5.5],[x+14,4.5+n(5)/2,4],[x+17,k<13?3.5:2.5,3],[x+20,1.5,2],[x+24,k<13?1:.6,.8],[x+28,.3,.3]);
 if(k<5)back.push([x+30,.3,.3],[x+30.5,4.5,4.5],[x+34,3,3.5],[x+38,1.5,2.5],[x+42,1,1],[x+45,2,2],[x+48,4,3.5],[x+51,1.5,2],[x+56,1,1]);
 else if(k<13)back.push([x+30,.3,.3],[x+32,3,3],[x+36,2,1.5],[x+40,1,1.3],[x+46,1.6,1],[x+52,.8,1],[x+57,.4,.4]);}

/* clips */
const rect=(x,y,w,h,a)=>`<rect x="${x}" y="${y}" width="${w}" height="${h}" ${a}/>`;
const clip=(x,y,w,f,edge,hi)=>rect(x,y,w,82,`fill="${edge}"`)+rect(x+2,y+2,w-3,78,`fill="${f}"`)+rect(x+1.5,y+2.5,w-3,77,`fill="none" stroke="${hi}"`);
const lines=(x0,x1,y,h,c)=>{let s='';for(let k=0;k<40;k++){const x=beat(k);if(x>x0+3&&x<x1-2)s+=rect(x,y,k%2?1:2,h,`fill="${c}"`)}return s};
const label=(x,y,t,c)=>`<text x="${x}" y="${y}" font-size="12" font-weight="bold" fill="${c}">${t}</text>`;
const W=4000;let s='<defs><pattern id="hatch" width="10" height="10" patternUnits="userSpaceOnUse"><path d="M-2-2 12 12M-2 8 2 12M8-2 12 2" stroke="#50465a" stroke-opacity=".42" stroke-width="2.200"/></pattern></defs><g transform="translate(-905,-249)">';
for(let k=0;k<60;k++){const b=k%4==1;s+=rect(beat(k),249,k%2&&!b?1:2,W,`fill="${b?'#64686c':'#53575b'}"`)}
for(let y=333;y<3000;y+=85)s+=rect(905,y-1,W,1,'fill="#474b51"');
s+=clip(900,250,1200,'#93bf4d','#75a13d','#9bc859')+lines(905,2100,253,76,'#84b23c');
const g='fill="#5d8f27" stroke="#1c2c08" stroke-width="1.100"';
s+=wave(back,272,g,.2)+wave(back.map(p=>[p[0],Math.min(p[1],5.5),p[2]*.9]),311,g,.2);
s+='<path d="M905 304H1905L1930 340" fill="none" stroke="#b4b5b0" stroke-width="2"/><path d="M1905.500 253V328" stroke="#b4b5b0" stroke-dasharray="1 2"/>';
const pk=['#b3328f','#9a2a7a','#c64aa5'],pd=['#90286f','#8a1f69','#b53c92'],gy=['#afb0b4','#97999c','#b9babd'];
const dk='fill="#5a1847" stroke="#2a0a20" stroke-width="1"';
s+=clip(900,505,485,...pk)+lines(905,1384,508,75,'#96297a')+wave(soloA,547,dk);
s+=clip(1384,505,88,...pk)+rect(1388,508,80,75,'fill="url(#hatch)"')+rect(1388,509,58,20,'fill="#b3328f"')+wave(solo09,547,dk);
s+=clip(1472,505,235,...pk)+rect(1475,508,229,75,'fill="url(#hatch)"')+rect(1475,509,58,20,'fill="#b3328f"')+lines(1475,1705,508,75,'#8a2a72')+wave(solo16,547,dk);
s+=label(1390,523,'Solo_09','#c9b5c3')+label(1477,523,'Solo_16','#c9b5c3');
s+=clip(1697,590,400,...pk)+lines(1697,2000,593,75,'#96297a')+wave(l0209,632,dk)+label(1704,608,'L 02 (D)_09','#c9b5c3')+'<path d="M1909 595l7 5-7 5zM1917 595v10" fill="#d8bcd0" stroke="#d8bcd0"/>';
s+=clip(900,675,566,...pd)+lines(905,1466,678,75,'#6d1c54')+wave(l02a,717,'fill="#2f0c26" stroke="#1d0717"');
s+=clip(1467,675,600,...pd)+lines(1467,2000,678,75,'#6d1c54')+wave(l0208,717,'fill="#2f0c26" stroke="#1d0717"')+label(1473,693,'L 02_08','#c9b5c3');
const ln='fill="#afb0b4" stroke="#a12f80" stroke-width="1.200"';
s+=clip(1384,760,355,...gy)+rect(1387,764,284,74,'fill="url(#hatch)" opacity=".6"')+lines(1386,1735,763,75,'#a0a2a6')+wave(solo14,802,ln)+rect(1389,764,56,20,'fill="#afb0b4" opacity=".8"')+rect(1673,762,1,78,'fill="#97999c"')+wave(P('1674,0;1697,0;1698,3;1701,0;1736,0'),802,ln,0)+label(1390,778,'Solo_14','#858688');
s+=clip(900,930,485,...gy)+lines(905,1384,933,75,'#a3a5a8')+wave(r03,972,ln,.03)+rect(905,953,477,2,'fill="#c568a8"');
s+=rect(1450,249,W,W,'fill="#7aa4cd" fill-opacity=".443"')+'</g>';
document.getElementById('arrange').innerHTML=s;
</script>
<script src="https://cdn.jsdelivr.net/npm/bootstrap@5.3.0/dist/js/bootstrap.bundle.min.js"></script>
</body>
</html>
